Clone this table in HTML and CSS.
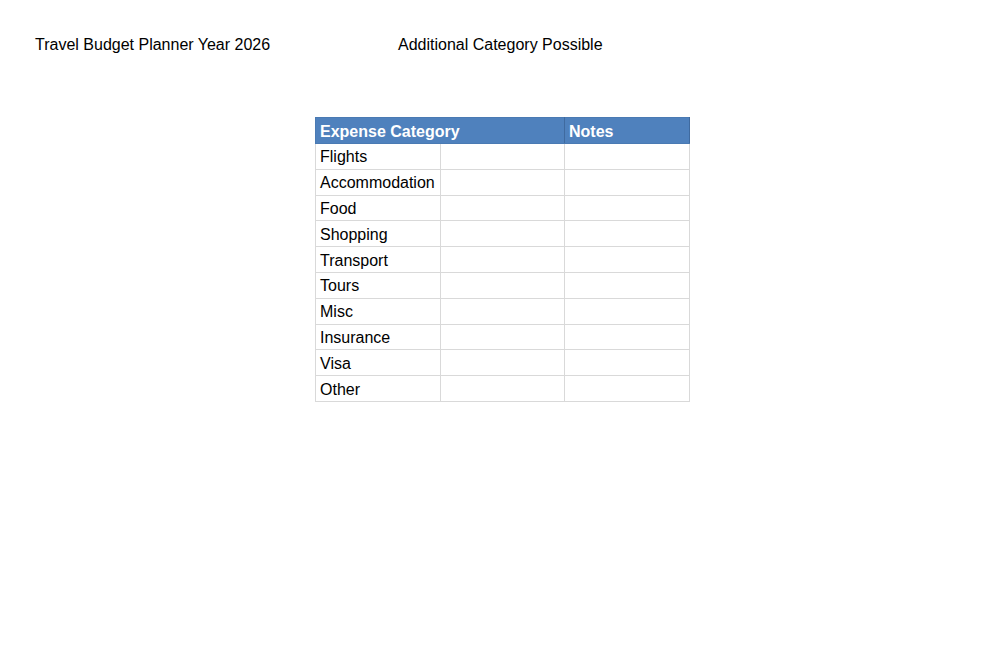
FILE: index.html
```html
<!DOCTYPE html>
<html>
<head>
<meta charset="utf-8">
<link rel="stylesheet" href="styles.css">
</head>
<body>
<div class="titles">
  <div class="title">Travel Budget Planner Year 2026</div>
  <div class="title">Additional Category Possible</div>
</div>
<table class="budget">
  <colgroup>
    <col class="col-a">
    <col class="col-b">
    <col class="col-c">
  </colgroup>
  <thead>
    <tr><th colspan="2">Expense Category</th><th>Notes</th></tr>
  </thead>
  <tbody>
    <tr><td>Flights</td><td></td><td></td></tr>
    <tr><td>Accommodation</td><td></td><td></td></tr>
    <tr><td>Food</td><td></td><td></td></tr>
    <tr><td>Shopping</td><td></td><td></td></tr>
    <tr><td>Transport</td><td></td><td></td></tr>
    <tr><td>Tours</td><td></td><td></td></tr>
    <tr><td>Misc</td><td></td><td></td></tr>
    <tr><td>Insurance</td><td></td><td></td></tr>
    <tr><td>Visa</td><td></td><td></td></tr>
    <tr><td>Other</td><td></td><td></td></tr>
  </tbody>
</table>
</body>
</html>
```
FILE: styles.css
```css
html, body {
  margin: 0;
  padding: 0;
  background: #ffffff;
  font-family: "Liberation Sans", Arial, sans-serif;
  color: #000;
}
.titles {
  display: grid;
  grid-template-columns: 363px auto;
  padding: 36px 0 0 35px;
  font-size: 16px;
  line-height: 18px;
}
.budget {
  margin: 63px 0 0 315px;
  border-collapse: collapse;
  table-layout: fixed;
  width: 374px;
  font-size: 16px;
}
.col-a { width: 125px; }
.col-b { width: 124px; }
.col-c { width: 125px; }
.budget th, .budget td {
  height: 25.8px;
  padding: 0 0 0 4px;
  text-align: left;
  vertical-align: middle;
  border: 1px solid #d9d9d9;
  box-sizing: border-box;
  white-space: nowrap;
  overflow: hidden;
}
.budget td:first-child {
  padding-top: 2px;
}
.budget th {
  height: 26px;
  background: #4f81bd;
  color: #ffffff;
  font-weight: bold;
  border: 1px solid #4a7ab3;
  border-right-color: #3f6a9f;
  padding-top: 2px;
}
```
